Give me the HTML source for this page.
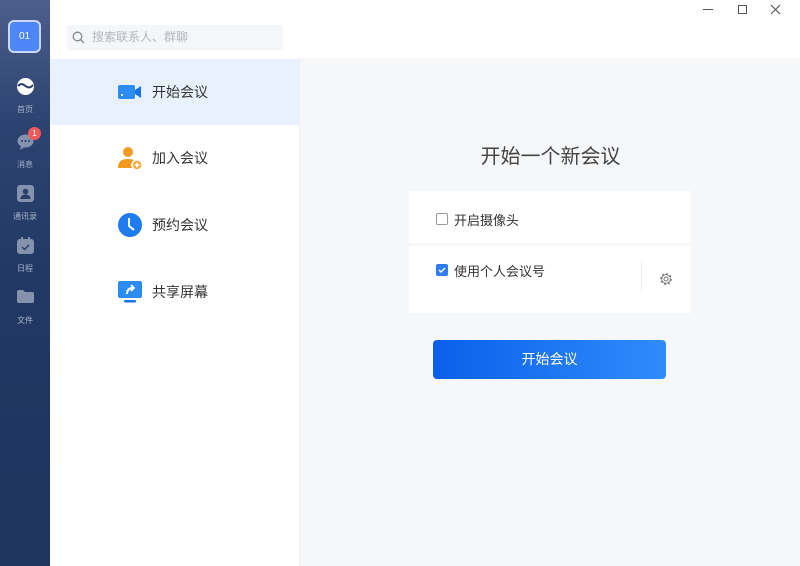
<!DOCTYPE html>
<html><head><meta charset="utf-8">
<style>
*{margin:0;padding:0;box-sizing:border-box}
body{width:800px;height:566px;overflow:hidden;background:#fff;font-family:"Liberation Sans","Noto Sans CJK SC",sans-serif;position:relative}
.side{position:absolute;left:0;top:0;width:50px;height:566px;background:linear-gradient(#4d5f8c 0%,#2c4270 22%,#223864 50%,#1f3560 100%)}
.av{position:absolute;left:8px;top:20px;width:33px;height:33px;border:2px solid #c9d8ff;border-radius:6px;background:#4f86f7;color:#fff;font-size:10px;text-align:center;line-height:29px}
.nav{position:absolute;left:0;width:50px;text-align:center;color:#a9b4cc;font-size:8px}
.nav svg{display:block;margin:0 auto 9px}
.list{position:absolute;left:50px;top:0;width:249px;height:566px;background:#fff}
.search{position:absolute;left:17px;top:25px;width:216px;height:25px;background:#f4f6f9;color:#b3b6bd;font-size:12px;line-height:25px;padding-left:25px}
.item{position:absolute;left:0;width:249px;height:66px;font-size:14px;color:#333;line-height:66px;padding-left:102px}
.item .i{position:absolute;left:68px;top:21px;width:24px;height:24px}
.main{position:absolute;left:299px;top:58px;width:501px;height:508px;background:#f6f7f9;border-left:1px solid #eceef1}
.top{position:absolute;left:299px;top:0;width:501px;height:58px;background:#fff}
.card{position:absolute;left:109px;width:282px;background:#fff}
.cb{position:absolute;width:12px;height:12px;border:1px solid #999;border-radius:2px}
.btn{position:absolute;left:133px;top:282px;width:233px;height:39px;border-radius:4px;background:linear-gradient(90deg,#0b5fea,#2f8cfb);color:#fff;font-size:14px;text-align:center;line-height:39px}
</style></head><body>
<div class="top"></div>
<div class="side">
 <div class="av">01</div>
 <div class="nav" style="top:78px"><svg width="17" height="17" viewBox="0 0 17 17"><circle cx="8.5" cy="8.5" r="8.5" fill="#fff"/><path d="M1 8c3-3 5-2 7.5 0s5 2 7.5-1" stroke="#2a3e6b" stroke-width="2" fill="none"/></svg>首页</div>
 <div class="nav" style="top:133px"><svg width="17" height="17" viewBox="0 0 17 17"><ellipse cx="8.5" cy="8" rx="8" ry="6.5" fill="#8592ad"/><path d="M4 13l-1 4 5-3z" fill="#8592ad"/><circle cx="5" cy="8" r="1" fill="#2a3e6b"/><circle cx="8.5" cy="8" r="1" fill="#2a3e6b"/><circle cx="12" cy="8" r="1" fill="#2a3e6b"/></svg>消息</div>
 <div style="position:absolute;left:28px;top:127px;width:13px;height:13px;border-radius:50%;background:#f05a5a;color:#fff;font-size:8px;text-align:center;line-height:13px">1</div>
 <div class="nav" style="top:185px"><svg width="17" height="17" viewBox="0 0 17 17"><rect width="17" height="17" rx="3" fill="#8592ad"/><circle cx="8.5" cy="6.5" r="2.8" fill="#2a3e6b"/><path d="M3.5 14c0-3 2-4.5 5-4.5s5 1.5 5 4.5z" fill="#2a3e6b"/></svg>通讯录</div>
 <div class="nav" style="top:237px"><svg width="17" height="17" viewBox="0 0 17 17"><rect y="2" width="17" height="15" rx="3" fill="#8592ad"/><rect x="4" y="0" width="2" height="4" fill="#8592ad"/><rect x="11" y="0" width="2" height="4" fill="#8592ad"/><path d="M5 10l2.5 2.5 4.5-4.5" stroke="#2a3e6b" stroke-width="1.5" fill="none"/></svg>日程</div>
 <div class="nav" style="top:290px"><svg width="17" height="13" viewBox="0 0 17 13" style="margin-bottom:12px"><path d="M0 2a2 2 0 012-2h4l2 2h7a2 2 0 012 2v7a2 2 0 01-2 2H2a2 2 0 01-2-2z" fill="#8592ad"/></svg>文件</div>
</div>
<div class="list">
 <div class="search"><svg style="position:absolute;left:5px;top:6px" width="13" height="13" viewBox="0 0 13 13"><circle cx="5.5" cy="5.5" r="4.3" fill="none" stroke="#888" stroke-width="1.3"/><path d="M8.7 8.7L12 12" stroke="#888" stroke-width="1.3"/></svg>搜索联系人、群聊</div>
 <div class="item" style="top:59px;background:#e8f1fd">
  <svg class="i" viewBox="0 0 24 24"><rect x="0" y="5" width="17" height="14" rx="2" fill="#2b8cf2"/><path d="M17 10l6-4v12l-6-4z" fill="#1a73e8"/><circle cx="4" cy="15" r="1" fill="#fff"/></svg>开始会议</div>
 <div class="item" style="top:125px">
  <svg class="i" viewBox="0 0 24 24"><circle cx="10" cy="6" r="5" fill="#f39a1f"/><path d="M0 22c0-7 4-9 10-9s9 2 10 5v4z" fill="#f39a1f"/><circle cx="19" cy="19" r="5" fill="#f7a83a" stroke="#fff" stroke-width="1.5"/><path d="M16.5 19h5M19 16.5v5" stroke="#fff" stroke-width="1.5"/></svg>加入会议</div>
 <div class="item" style="top:192px">
  <svg class="i" viewBox="0 0 24 24"><circle cx="12" cy="12" r="12" fill="#1f7cf0"/><path d="M11 5v8l5 4" stroke="#fff" stroke-width="2" fill="none"/></svg>预约会议</div>
 <div class="item" style="top:259px">
  <svg class="i" viewBox="0 0 24 24"><rect x="0" y="1" width="24" height="17" rx="2" fill="#2b8cf2"/><rect x="6" y="20" width="12" height="2.5" rx="1" fill="#1a73e8"/><path d="M9 14c0-4 2-6 6-6" stroke="#fff" stroke-width="2" fill="none"/><path d="M13 5l3 3-3 3" stroke="#fff" stroke-width="1.8" fill="none"/></svg>共享屏幕</div>
</div>
<div class="main">
 <div style="position:absolute;left:0;width:501px;top:82px;text-align:center;font-size:20px;color:#444">开始一个新会议</div>
 <div class="card" style="top:133px;height:52px"><div class="cb" style="left:27px;top:22px"></div><div style="position:absolute;left:45px;top:19px;font-size:13px;color:#333">开启摄像头</div></div>
 <div class="card" style="top:188px;height:67px"><div class="cb" style="left:27px;top:18px;background:#2f7ef0;border-color:#2f7ef0"><svg width="10" height="10" viewBox="0 0 10 10" style="position:absolute;left:0;top:0"><path d="M2 5l2 2 4-4" stroke="#fff" stroke-width="1.4" fill="none"/></svg></div><div style="position:absolute;left:45px;top:15px;font-size:13px;color:#333">使用个人会议号</div>
  <div style="position:absolute;left:232px;top:16px;width:1px;height:30px;background:#eee"></div>
  <svg style="position:absolute;left:250px;top:26px" width="14" height="14" viewBox="0 0 14 14"><circle cx="7" cy="7" r="2" fill="none" stroke="#777" stroke-width="1"/><circle cx="7" cy="7" r="5" fill="none" stroke="#777" stroke-width="1.6" stroke-dasharray="2 1.9"/><circle cx="7" cy="7" r="4.3" fill="none" stroke="#777" stroke-width="0.8"/></svg></div>
 <div class="btn">开始会议</div>
</div>
<div style="position:absolute;left:703px;top:9px;width:10px;height:1px;background:#555"></div>
<div style="position:absolute;left:738px;top:5px;width:9px;height:9px;border:1px solid #555"></div>
<svg style="position:absolute;left:770px;top:4px" width="11" height="11" viewBox="0 0 11 11"><path d="M1 1l9 9M10 1l-9 9" stroke="#555" stroke-width="1.1"/></svg>
</body></html>
